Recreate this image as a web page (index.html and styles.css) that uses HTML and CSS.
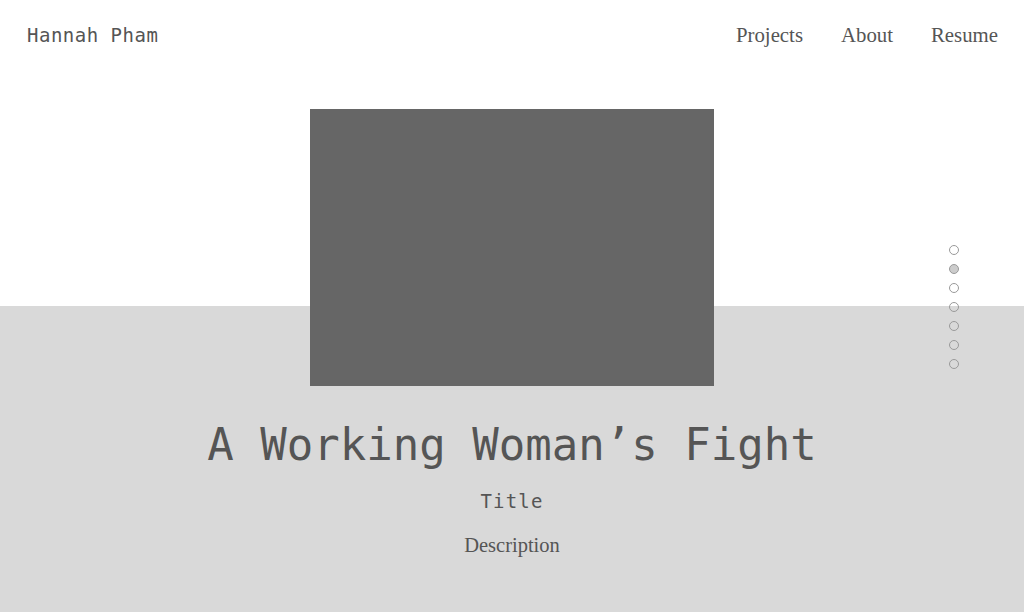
FILE: index.html
```html
<!DOCTYPE html>
<html lang="en">
<head>
<meta charset="utf-8">
<title>Hannah Pham</title>
<link rel="stylesheet" href="styles.css">
</head>
<body>
<header class="site-header">
  <div class="brand">Hannah Pham</div>
  <nav class="nav">
    <a href="#">Projects</a>
    <a href="#">About</a>
    <a href="#">Resume</a>
  </nav>
</header>
<main class="hero">
  <div class="cover"></div>
  <h1 class="project-title">A Working Woman’s Fight</h1>
  <div class="subtitle">Title</div>
  <p class="description">Description</p>
</main>
<ul class="dots">
  <li></li>
  <li class="active"></li>
  <li></li>
  <li></li>
  <li></li>
  <li></li>
  <li></li>
</ul>
</body>
</html>
```
FILE: styles.css
```css
html, body {
  margin: 0;
  padding: 0;
  height: 100%;
}
body {
  background: linear-gradient(#ffffff 0, #ffffff 306px, #d9d9d9 306px);
  color: #555555;
  overflow: hidden;
}
.site-header {
  height: 70px;
  display: flex;
  justify-content: space-between;
  align-items: center;
  padding: 0 26px 0 27px;
}
.brand {
  font-family: "DejaVu Sans Mono", monospace;
  font-size: 19px;
  line-height: 24px;
  letter-spacing: 0.5px;
  color: #555555;
}
.nav {
  display: flex;
  gap: 38px;
}
.nav a {
  font-family: "Liberation Serif", serif;
  font-size: 20.8px;
  line-height: 24px;
  color: #555555;
  text-decoration: none;
}
.hero {
  padding-top: 39px;
  display: flex;
  flex-direction: column;
  align-items: center;
}
.cover {
  width: 404px;
  height: 277px;
  background: #666666;
}
.project-title {
  margin: 33px 0 0;
  font-family: "DejaVu Sans Mono", monospace;
  font-weight: normal;
  font-size: 44px;
  line-height: 52px;
  color: #555555;
}
.subtitle {
  margin-top: 18px;
  font-family: "DejaVu Sans Mono", monospace;
  font-size: 19px;
  line-height: 24px;
  letter-spacing: 1.2px;
  color: #555555;
}
.description {
  margin: 20px 0 0;
  font-family: "Liberation Serif", serif;
  font-size: 20.5px;
  line-height: 24px;
  color: #555555;
}
.dots {
  position: fixed;
  right: 65px;
  top: 245px;
  margin: 0;
  padding: 0;
  list-style: none;
  display: flex;
  flex-direction: column;
  gap: 9px;
}
.dots li {
  width: 8px;
  height: 8px;
  border: 1px solid #999999;
  border-radius: 50%;
  box-sizing: content-box;
}
.dots li.active {
  background: #cccccc;
}
```
